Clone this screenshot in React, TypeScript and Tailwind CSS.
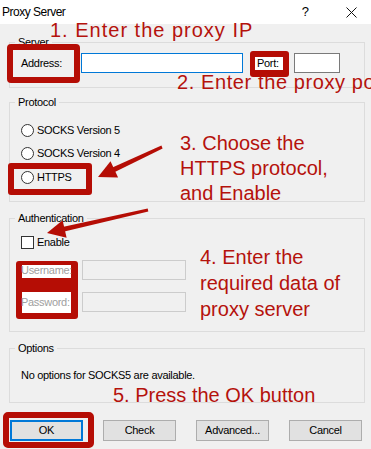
import React from "react";

const RED = "#b50d05";

function Radio({ label }: { label: string }) {
  return (
    <div className="flex h-[16px] items-center">
      <span className="h-[13px] w-[13px] rounded-full border border-[#333333] bg-white" />
      <span className="ml-[3px]">{label}</span>
    </div>
  );
}

function Group({
  title,
  children,
  className,
}: {
  title: string;
  children: React.ReactNode;
  className?: string;
}) {
  return (
    <fieldset className={"border border-[#dcdcdc] " + (className ?? "")}>
      <legend className="ml-[5px] px-[3px] text-[11px] leading-[14px]">{title}</legend>
      {children}
    </fieldset>
  );
}

export default function App() {
  return (
    <div className="relative h-[449px] w-[371px] overflow-hidden bg-[#f0f0f0] font-['Liberation_Sans',Arial,sans-serif] text-[11px] tracking-[-0.3px] text-black">
      {/* Title bar */}
      <div className="flex h-[24px] items-center bg-white">
        <span className="ml-[2px] text-[12px] tracking-[-0.5px]">Proxy Server</span>
        <span className="ml-auto mr-[37px] text-[13px] tracking-normal">?</span>
        <svg width="11" height="11" viewBox="0 0 11 11" className="mr-[14px]">
          <path d="M0.5 0.5 L10.5 10.5 M10.5 0.5 L0.5 10.5" stroke="#111" strokeWidth="1" />
        </svg>
      </div>

      <div className="pl-[9px] pr-[6px]">
        {/* Server */}
        <Group title="Server" className="mt-[11px]">
          <div className="flex h-[20px] items-center pl-[11px] mt-[4px] mb-[14px] box-content">
            <span className="relative z-10 w-[60px]">Address:</span>
            <div className="h-[20px] w-[162px] border border-[#0078d7] bg-white" />
            <span className="relative z-10 ml-[14px] w-[37px]">Port:</span>
            <div className="h-[20px] w-[46px] border border-[#7a7a7a] bg-white" />
          </div>
        </Group>

        {/* Protocol */}
        <Group title="Protocol" className="mt-[7px]">
          <div className="flex flex-col pl-[11px] pt-[13px] pb-[16px]">
            <Radio label="SOCKS Version 5" />
            <div className="mt-[7px]">
              <Radio label="SOCKS Version 4" />
            </div>
            <div className="mt-[8px]">
              <Radio label="HTTPS" />
            </div>
          </div>
        </Group>

        {/* Authentication */}
        <Group title="Authentication" className="mt-[9px]">
          <div className="flex flex-col pl-[11px] pt-[9px] pb-[19px]">
            <div className="flex h-[16px] items-center">
              <span className="h-[13px] w-[13px] border border-[#333333] bg-white" />
              <span className="ml-[3px]">Enable</span>
            </div>
            <div className="mt-[10px] flex h-[20px] items-center">
              <span className="relative z-10 w-[61px] text-[#a0a0a0]">Username:</span>
              <div className="h-[20px] w-[104px] border border-[#cccccc] bg-[#f0f0f0]" />
            </div>
            <div className="mt-[12px] flex h-[20px] items-center">
              <span className="relative z-10 w-[61px] text-[#a0a0a0]">Password:</span>
              <div className="h-[20px] w-[104px] border border-[#cccccc] bg-[#f0f0f0]" />
            </div>
          </div>
        </Group>

        {/* Options */}
        <Group title="Options" className="mt-[9px]">
          <div className="pl-[11px] pt-[12px] pb-[19px]">
            <div className="flex h-[16px] items-center">No options for SOCKS5 are available.</div>
          </div>
        </Group>

        {/* Buttons */}
        <div className="ml-[1px] mt-[17px] flex gap-[20px]">
          <button className="h-[21px] w-[73px] border-2 border-[#0078d7] bg-[#e1e1e1] text-[11px]">OK</button>
          <button className="h-[21px] w-[73px] border border-[#adadad] bg-[#e1e1e1] text-[11px]">Check</button>
          <button className="h-[21px] w-[73px] border border-[#adadad] bg-[#e1e1e1] text-[11px]">Advanced...</button>
          <button className="h-[21px] w-[73px] border border-[#adadad] bg-[#e1e1e1] text-[11px]">Cancel</button>
        </div>
      </div>

      {/* Red highlight overlays */}
      <div className="absolute left-[7px] top-[44px] h-[39px] w-[73px] rounded-[4px] border-[6px] border-[#b50d05]" />
      <div className="absolute left-[250px] top-[51px] h-[26px] w-[39px] rounded-[3px] bg-[#b50d05]">
        <div className="absolute left-[5px] top-[6px] h-[13px] w-[28px] bg-white" />
      </div>
      <div className="absolute left-[8px] top-[163px] h-[32px] w-[84px] rounded-[3px] border-[6px] border-[#b50d05]" />
      <div className="absolute left-[16px] top-[261px] h-[58px] w-[62px] rounded-[3px] bg-[#b50d05]">
        <div className="absolute left-[6px] top-[4px] h-[13px] w-[49px] bg-white" />
        <div className="absolute left-[6px] top-[31px] h-[21px] w-[49px] bg-white" />
      </div>
      <div className="absolute left-[3px] top-[412px] h-[36px] w-[91px] rounded-[5px] border-[6px] border-[#b50d05]" />

      {/* Arrows */}
      <svg className="pointer-events-none absolute left-0 top-0" width="371" height="449" viewBox="0 0 371 449">
        <g fill={RED}>
          <polygon points="161.4,145.6 162.6,148.4 111.8,173.4 109.6,168.8" />
          <polygon points="98,177 118.1,177.5 110.5,161.3" />
          <polygon points="147.7,208.5 148.3,211.5 61.2,232.3 60.1,227.5" />
          <polygon points="47,233 66.6,237.8 62.6,220.2" />
        </g>
      </svg>

      {/* Annotation texts */}
      <div className="pointer-events-none absolute inset-0 font-['Liberation_Sans',Arial,sans-serif] text-[20px] tracking-normal text-[#b5120c]">
        <div className="absolute left-[50px] top-[20px] whitespace-nowrap leading-[20px] tracking-[1px]">1. Enter the proxy IP</div>
        <div className="absolute left-[177px] top-[72px] whitespace-nowrap leading-[20px] tracking-[0.6px]">2. Enter the proxy port</div>
        <div className="absolute left-[180px] top-[131px] whitespace-nowrap leading-[25px]">
          <div>3. Choose the</div>
          <div>HTTPS protocol,</div>
          <div>and Enable</div>
        </div>
        <div className="absolute left-[200px] top-[244px] whitespace-nowrap leading-[26px]">
          <div>4. Enter the</div>
          <div>required data of</div>
          <div>proxy server</div>
        </div>
        <div className="absolute left-[113px] top-[385px] whitespace-nowrap leading-[20px]">5. Press the OK button</div>
      </div>
    </div>
  );
}
